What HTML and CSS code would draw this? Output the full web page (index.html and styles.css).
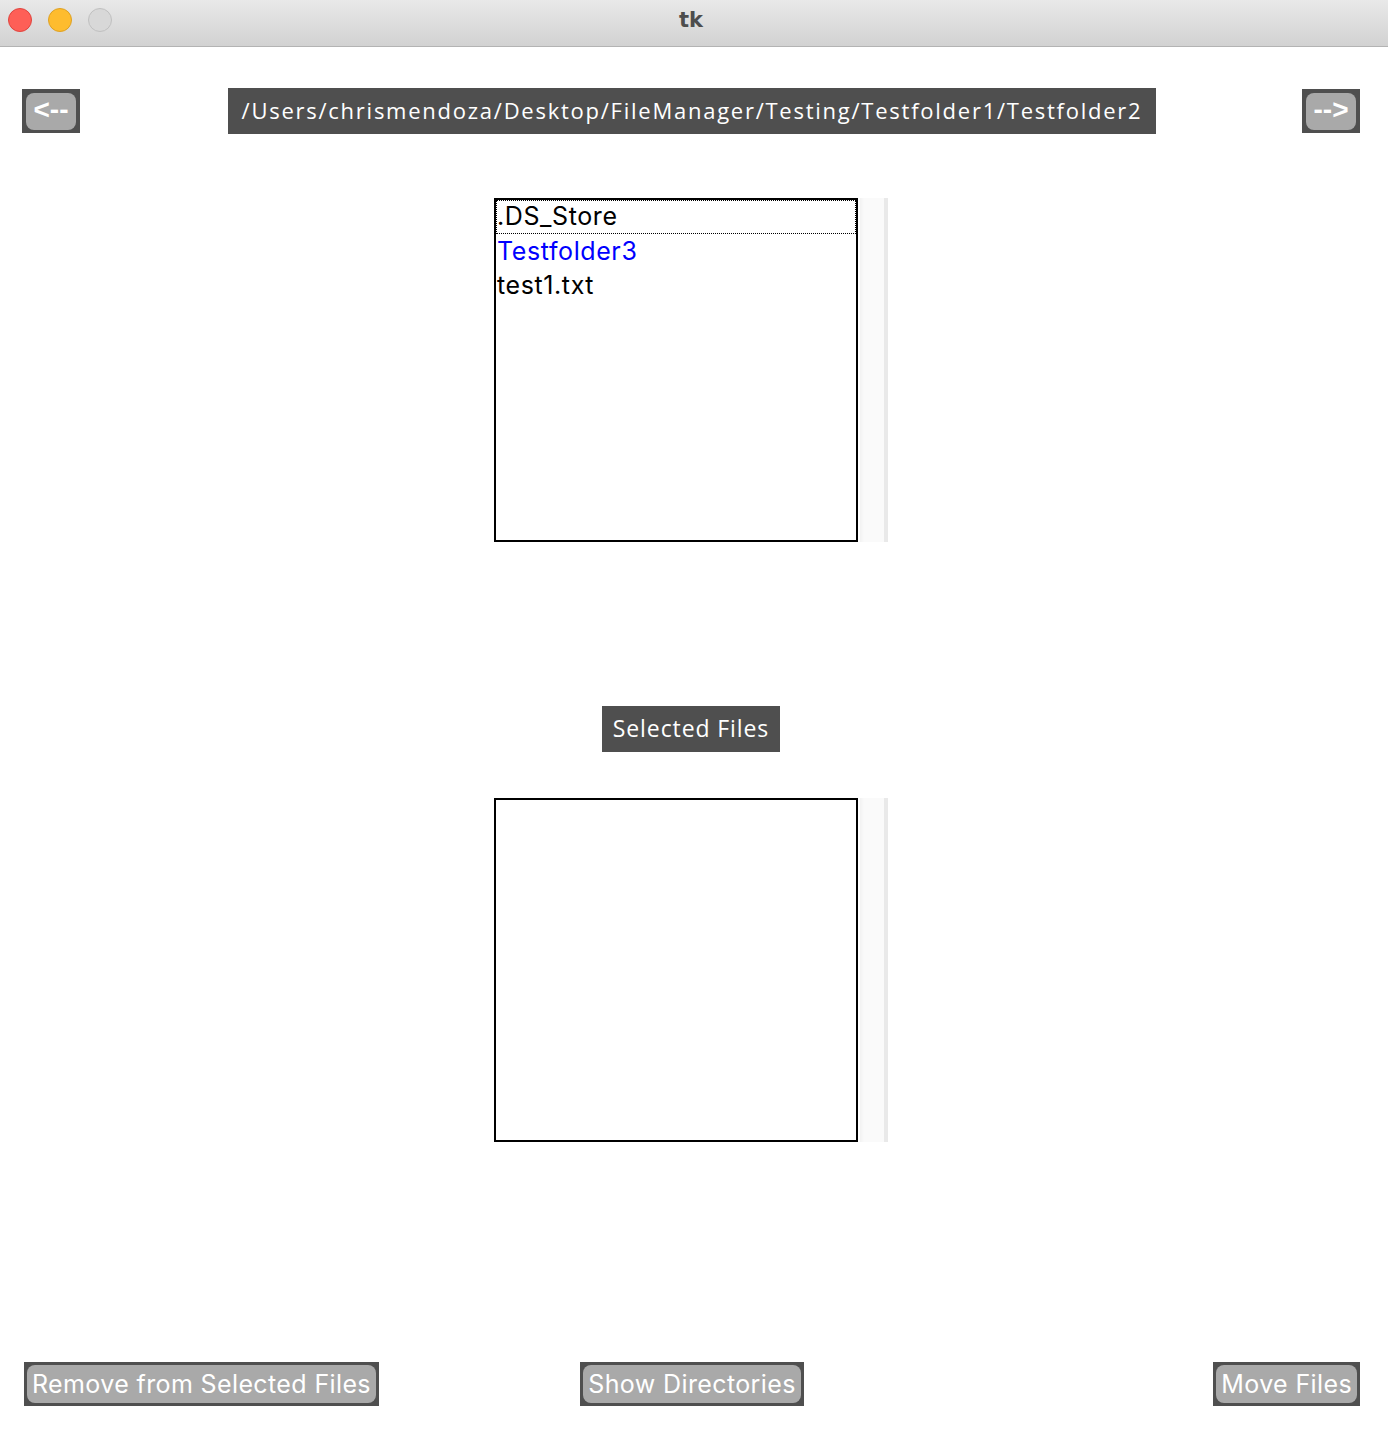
FILE: index.html
```html
<!DOCTYPE html>
<html>
<head>
<meta charset="utf-8">
<link rel="stylesheet" href="styles.css">
</head>
<body>
<div class="window">
  <div class="titlebar">
    <div class="lights">
      <span class="light red"></span>
      <span class="light yellow"></span>
      <span class="light gray"></span>
    </div>
    <div class="title">tk</div>
  </div>
  <div class="content">
    <div class="nav">
      <div class="nav-left"><div class="btn-frame small"><div class="btn">&lt;--</div></div></div>
      <div class="path">/Users/chrismendoza/Desktop/FileManager/Testing/Testfolder1/Testfolder2</div>
      <div class="nav-right"><div class="btn-frame small"><div class="btn">--&gt;</div></div></div>
    </div>
    <div class="list-wrap first">
      <div class="listbox">
        <div class="item focus">.DS_Store</div>
        <div class="item dir">Testfolder3</div>
        <div class="item">test1.txt</div>
      </div>
      <div class="scroll"></div>
    </div>
    <div class="label-row"><div class="label">Selected Files</div></div>
    <div class="list-wrap second">
      <div class="listbox"></div>
      <div class="scroll"></div>
    </div>
    <div class="actions">
      <div class="act-left"><div class="btn-frame"><div class="btn">Remove from Selected Files</div></div></div>
      <div class="btn-frame"><div class="btn">Show Directories</div></div>
      <div class="act-right"><div class="btn-frame"><div class="btn">Move Files</div></div></div>
    </div>
  </div>
</div>
</body>
</html>
```
FILE: styles.css
```css
html, body {
  margin: 0;
  padding: 0;
  background: #ffffff;
}
.window {
  width: 1388px;
  height: 1440px;
  display: flex;
  flex-direction: column;
  font-family: "Liberation Sans", Arial, sans-serif;
}
.titlebar {
  height: 46px;
  border-bottom: 1px solid #b3b3b3;
  background: linear-gradient(#e9e9e9, #d2d2d2);
  position: relative;
  display: flex;
  align-items: center;
  justify-content: center;
}
.lights {
  position: absolute;
  left: 8px;
  top: 8px;
  display: flex;
  gap: 16px;
}
.light {
  width: 22px;
  height: 22px;
  border-radius: 50%;
  border: 1px solid;
}
.red { background: #fe5f57; border-color: #e0443e; }
.yellow { background: #febc2e; border-color: #dea123; }
.gray { background: #d8d8d8; border-color: #c0c0c0; }
.title {
  font-family: "DejaVu Sans", sans-serif;
  font-weight: bold;
  font-size: 21px;
  color: #4d4d4d;
  margin-top: -7px;
  margin-right: 6px;
}
.content {
  display: flex;
  flex-direction: column;
}
.nav {
  margin-top: 41px;
  padding: 0 28px 0 22px;
  display: grid;
  grid-template-columns: 1fr auto 1fr;
  align-items: center;
}
.nav-right { display: flex; justify-content: flex-end; }
.btn-frame {
  background: #4f4f4f;
  padding: 3px;
  display: inline-flex;
  height: 44px;
  box-sizing: border-box;
}
.btn-frame.small {
  width: 58px;
  padding: 4px 4px 3px 4px;
}
.btn {
  flex: 1;
  background: #a9a9a9;
  border-radius: 8px;
  color: #ffffff;
  font-family: "Inter", "Liberation Sans", sans-serif;
  font-size: 25px;
  letter-spacing: 0.38px;
  line-height: 38px;
  padding: 0 5px;
  white-space: nowrap;
  text-align: center;
}
.small .btn {
  font-family: "Liberation Sans", Arial, sans-serif;
  font-size: 28px;
  line-height: 34px;
  padding: 0;
  font-weight: bold;
  letter-spacing: 0;
}
.path {
  background: #4f4f4f;
  color: #ffffff;
  font-family: "Open Sans", "DejaVu Sans", sans-serif;
  font-weight: 500;
  font-size: 22px;
  letter-spacing: 1.75px;
  height: 46px;
  line-height: 44px;
  width: 928px;
  box-sizing: border-box;
  text-align: center;
  white-space: nowrap;
  margin-left: 2px;
}
.list-wrap {
  display: flex;
  margin-left: 494px;
}
.list-wrap.first { margin-top: 64px; }
.list-wrap.second { margin-top: 46px; }
.listbox {
  width: 364px;
  height: 344px;
  box-sizing: border-box;
  border: 2px solid #000000;
  background: #ffffff;
}
.scroll {
  width: 28px;
  height: 344px;
  margin-left: 2px;
  box-sizing: border-box;
  background: linear-gradient(90deg, #f2f2f2 0, #fafafa 4px, #fafafa 24px, #e9e9e9 24px);
}
.item {
  font-family: "Inter", "Liberation Sans", sans-serif;
  font-size: 25px;
  letter-spacing: 0.6px;
  height: 34px;
  line-height: 34px;
  color: #000000;
  padding-left: 1px;
  box-sizing: border-box;
  white-space: nowrap;
}
.item.focus {
  border: 1px dotted #000000;
  line-height: 30px;
  padding-left: 0;
}
.item.dir { color: #0000ff; }
.label-row {
  margin-top: 164px;
  display: flex;
  justify-content: center;
  padding-right: 6px;
}
.label {
  background: #4f4f4f;
  color: #ffffff;
  font-family: "Open Sans", "DejaVu Sans", sans-serif;
  font-weight: 500;
  font-size: 23px;
  letter-spacing: 0.9px;
  width: 178px;
  height: 46px;
  line-height: 44px;
  text-align: center;
}
.actions {
  margin-top: 220px;
  display: grid;
  grid-template-columns: 1fr auto 1fr;
  padding: 0 28px 0 24px;
}
.act-right { display: flex; justify-content: flex-end; }
```
